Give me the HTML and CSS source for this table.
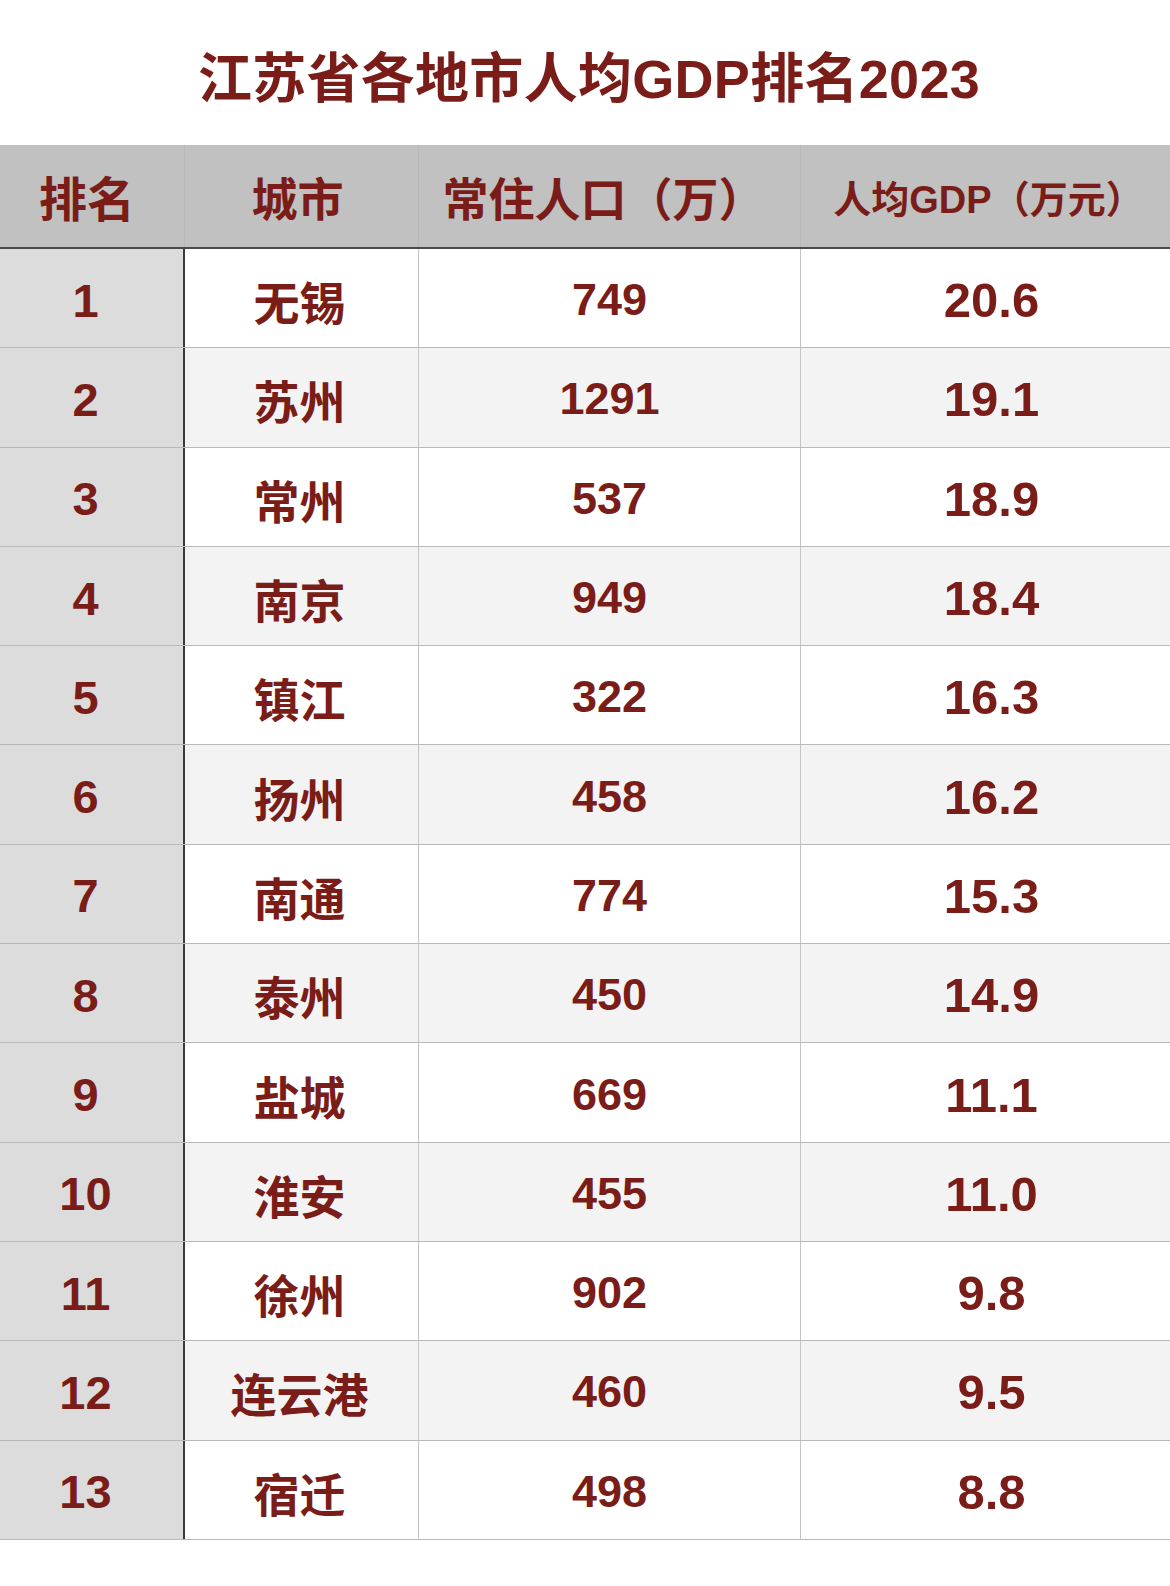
FILE: index.html
```html
<!DOCTYPE html>
<html lang="zh-CN">
<head>
<meta charset="utf-8">
<title>江苏省各地市人均GDP排名2023</title>
<link rel="stylesheet" href="styles.css">
</head>
<body>
<div class="page">
  <h1 class="title">江苏省各地市人均GDP排名2023</h1>
  <div class="table">
    <div class="row head">
      <div class="cell c1">排名</div>
      <div class="cell c2">城市</div>
      <div class="cell c3">常住人口（万）</div>
      <div class="cell c4 small">人均GDP（万元）</div>
    </div>
    <div class="row odd"><div class="cell c1">1</div><div class="cell c2">无锡</div><div class="cell c3">749</div><div class="cell c4">20.6</div></div>
    <div class="row even"><div class="cell c1">2</div><div class="cell c2">苏州</div><div class="cell c3">1291</div><div class="cell c4">19.1</div></div>
    <div class="row odd"><div class="cell c1">3</div><div class="cell c2">常州</div><div class="cell c3">537</div><div class="cell c4">18.9</div></div>
    <div class="row even"><div class="cell c1">4</div><div class="cell c2">南京</div><div class="cell c3">949</div><div class="cell c4">18.4</div></div>
    <div class="row odd"><div class="cell c1">5</div><div class="cell c2">镇江</div><div class="cell c3">322</div><div class="cell c4">16.3</div></div>
    <div class="row even"><div class="cell c1">6</div><div class="cell c2">扬州</div><div class="cell c3">458</div><div class="cell c4">16.2</div></div>
    <div class="row odd"><div class="cell c1">7</div><div class="cell c2">南通</div><div class="cell c3">774</div><div class="cell c4">15.3</div></div>
    <div class="row even"><div class="cell c1">8</div><div class="cell c2">泰州</div><div class="cell c3">450</div><div class="cell c4">14.9</div></div>
    <div class="row odd"><div class="cell c1">9</div><div class="cell c2">盐城</div><div class="cell c3">669</div><div class="cell c4">11.1</div></div>
    <div class="row even"><div class="cell c1">10</div><div class="cell c2">淮安</div><div class="cell c3">455</div><div class="cell c4">11.0</div></div>
    <div class="row odd"><div class="cell c1">11</div><div class="cell c2">徐州</div><div class="cell c3">902</div><div class="cell c4">9.8</div></div>
    <div class="row even"><div class="cell c1">12</div><div class="cell c2">连云港</div><div class="cell c3">460</div><div class="cell c4">9.5</div></div>
    <div class="row odd"><div class="cell c1">13</div><div class="cell c2">宿迁</div><div class="cell c3">498</div><div class="cell c4">8.8</div></div>
  </div>
</div>
</body>
</html>
```

FILE: styles.css
```css
html, body {
  margin: 0;
  padding: 0;
  background: #ffffff;
}

.page {
  width: 1170px;
  height: 1586px;
  font-family: "Liberation Sans", "Noto Sans CJK SC", sans-serif;
  color: #7a1d19;
  overflow: hidden;
}

.title {
  margin: 0;
  height: 145px;
  display: flex;
  align-items: center;
  justify-content: center;
  font-size: 54px;
  font-weight: 700;
  padding-top: 4px;
  box-sizing: border-box;
  padding-left: 8px;
  letter-spacing: 0.3px;
}

.table {
  display: flex;
  flex-direction: column;
}

.row {
  display: grid;
  grid-template-columns: 185px 234px 382px 1fr;
  height: 99.3px;
  box-sizing: border-box;
  border-bottom: 1px solid #b9b9b9;
}

.row.head {
  height: 104px;
  background: #c1c1c1;
  border-bottom: 2px solid #4a4a4a;
}

.row.odd { background: #ffffff; }
.row.even { background: #f3f3f3; }

.cell {
  display: flex;
  align-items: center;
  justify-content: center;
  font-weight: 700;
  box-sizing: border-box;
  border-right: 1px solid #c4c4c4;
  padding-top: 4px;
}

.row .c1 {
  background: #dcdcdc;
  border-right: 2px solid #3a3a3a;
  font-size: 47px;
  padding-right: 12px;
}

.row .c2 { font-size: 46px; padding-right: 4px; }
.row .c3 { font-size: 45px; }
.row .c4 { font-size: 49px; border-right: none; padding-left: 12px; }

.row.head .cell {
  background: #c1c1c1;
  border-right: 1px solid #b8b8b8;
  padding-top: 2px;
  padding-bottom: 2px;
}

.row.head .c1 { font-size: 48px; padding-right: 10px; }
.row.head .c2 { font-size: 46px; padding-right: 8px; }
.row.head .c3 { font-size: 46px; padding-right: 12px; }
.row.head .c4 { font-size: 38px; border-right: none; padding-left: 6px; padding-right: 0; }
```
